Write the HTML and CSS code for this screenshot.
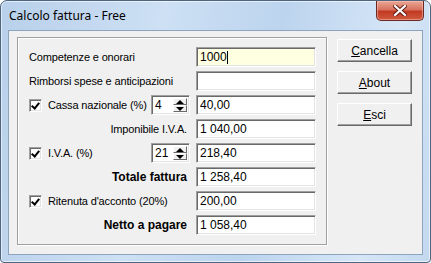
FILE: index.html
```html
<!DOCTYPE html>
<html lang="it">
<head>
  <meta charset="UTF-8">
  <title>Calcolo fattura - Free</title>
  <link rel="stylesheet" href="styles.css">
</head>
<body>
  <div class="window">
    <!-- Title bar -->
    <div class="titlebar">
      <span class="title">Calcolo fattura - Free</span>
      <div class="close">
        <svg width="14" height="11" viewBox="0 0 14 11" xmlns="http://www.w3.org/2000/svg">
          <path d="M2 1L12 10M12 1L2 10" stroke="#5a1a12" stroke-width="4" stroke-linecap="square"/>
          <path d="M2 1L12 10M12 1L2 10" stroke="white" stroke-width="2.2" stroke-linecap="square"/>
        </svg>
      </div>
    </div>

    <!-- Client area -->
    <div class="client">
      <div class="group">
        <div class="row">
          <span class="label">Competenze e onorari</span>
          <div class="field active">1000<span class="caret"></span></div>
        </div>
        <div class="row">
          <span class="label">Rimborsi spese e anticipazioni</span>
          <div class="field"></div>
        </div>
        <div class="row">
          <span class="check"></span>
          <span class="label">Cassa nazionale (%)</span>
          <div class="spinner">
            <span class="spin-value">4</span>
            <div class="spin-buttons">
              <span class="spin-btn"><span class="arrow-up"></span></span>
              <span class="spin-btn"><span class="arrow-down"></span></span>
            </div>
          </div>
          <div class="field">40,00</div>
        </div>
        <div class="row">
          <span class="label right">Imponibile I.V.A.</span>
          <div class="field">1 040,00</div>
        </div>
        <div class="row">
          <span class="check"></span>
          <span class="label">I.V.A. (%)</span>
          <div class="spinner">
            <span class="spin-value">21</span>
            <div class="spin-buttons">
              <span class="spin-btn"><span class="arrow-up"></span></span>
              <span class="spin-btn"><span class="arrow-down"></span></span>
            </div>
          </div>
          <div class="field">218,40</div>
        </div>
        <div class="row">
          <span class="label right bold">Totale fattura</span>
          <div class="field">1 258,40</div>
        </div>
        <div class="row">
          <span class="check"></span>
          <span class="label">Ritenuta d'acconto (20%)</span>
          <div class="field">200,00</div>
        </div>
        <div class="row">
          <span class="label right bold">Netto a pagare</span>
          <div class="field">1 058,40</div>
        </div>
      </div>

      <div class="buttons">
        <div class="button"><u>C</u>ancella</div>
        <div class="button"><u>A</u>bout</div>
        <div class="button"><u>E</u>sci</div>
      </div>
    </div>
  </div>
</body>
</html>
```

FILE: styles.css
```css
/* Reset and base styles */
* {
  margin: 0;
  padding: 0;
  box-sizing: border-box;
}

body {
  font-family: "Liberation Sans", Arial, sans-serif;
  font-size: 11px;
  color: #000;
  background-color: #fff;
}

/* Window frame */
.window {
  width: 431px;
  height: 263px;
  border: 1px solid #4e6580;
  border-radius: 7px 7px 4px 4px;
  padding: 0 7px 7px;
  background: linear-gradient(100deg, #b8d0ea 0%, #cde0f4 35%, #bcd4ee 60%, #d6e6f7 85%, #c3d8ef 100%);
  display: flex;
  flex-direction: column;
  box-shadow: inset 0 0 0 1px rgba(255, 255, 255, 0.6);
}

.titlebar {
  height: 29px;
  display: flex;
  align-items: flex-start;
  justify-content: space-between;
}

.title {
  font-family: "Noto Sans", "Open Sans", sans-serif;
  font-size: 12px;
  margin-top: 6px;
  margin-left: 1px;
}

.close {
  width: 48px;
  height: 20px;
  margin-right: -1px;
  border: 1px solid #6b2a22;
  border-top: none;
  border-radius: 0 0 5px 5px;
  background: linear-gradient(#e9a795 0%, #d8735f 45%, #c33a23 55%, #cf5a3e 100%);
  display: flex;
  align-items: center;
  justify-content: center;
  box-shadow: inset 0 0 0 1px rgba(255, 200, 190, 0.5);
}

/* Client area */
.client {
  flex: 1;
  background-color: #f0f0f0;
  border: 1px solid #8da4be;
  padding: 6px 0 0 8px;
  display: flex;
  align-items: flex-start;
  gap: 10px;
}

/* Group box */
.group {
  width: 310px;
  height: 208px;
  border: 1px solid #a0a0a0;
  box-shadow: inset 1px 1px #fff, 1px 1px #fff;
  padding: 9px 10px 0 11px;
  display: flex;
  flex-direction: column;
  gap: 4px;
}

.row {
  height: 20px;
  display: flex;
  align-items: center;
}

.label {
  flex: 1;
  white-space: nowrap;
  letter-spacing: -0.15px;
}

.label.right {
  text-align: right;
  padding-right: 9px;
}

.label.bold {
  font-weight: bold;
  font-size: 12px;
  letter-spacing: 0;
}

.field {
  width: 120px;
  height: 20px;
  background-color: #fff;
  border: 1px solid;
  border-color: #a0a0a0 #fff #fff #a0a0a0;
  box-shadow: inset 1px 1px #696969, inset -1px -1px #e3e3e3;
  padding: 0 3px;
  font-size: 12px;
  line-height: 18px;
  display: flex;
  align-items: center;
}

.field.active {
  background-color: #ffffe1;
}

.caret {
  width: 1px;
  height: 13px;
  background-color: #000;
}

/* Checkbox */
.check {
  width: 13px;
  height: 13px;
  margin-right: 6px;
  background-color: #fff;
  border: 1px solid;
  border-color: #a0a0a0 #fff #fff #a0a0a0;
  box-shadow: inset 1px 1px #696969, inset -1px -1px #e3e3e3;
  position: relative;
}

.check::after {
  content: "";
  position: absolute;
  left: 3px;
  top: 1px;
  width: 3px;
  height: 6px;
  border: solid #000;
  border-width: 0 2px 2px 0;
  transform: rotate(40deg);
}

/* Spinner */
.spinner {
  width: 39px;
  height: 20px;
  margin-right: 6px;
  background-color: #fff;
  border: 1px solid;
  border-color: #a0a0a0 #fff #fff #a0a0a0;
  box-shadow: inset 1px 1px #696969, inset -1px -1px #e3e3e3;
  display: flex;
  padding: 2px;
}

.spin-value {
  flex: 1;
  font-size: 12px;
  line-height: 14px;
  padding-left: 1px;
}

.spin-buttons {
  width: 14px;
  display: flex;
  flex-direction: column;
}

.spin-btn {
  flex: 1;
  background-color: #f0f0f0;
  border: 1px solid;
  border-color: #fff #696969 #696969 #fff;
  display: flex;
  align-items: center;
  justify-content: center;
}

.arrow-up {
  border-left: 4px solid transparent;
  border-right: 4px solid transparent;
  border-bottom: 4px solid #000;
}

.arrow-down {
  border-left: 4px solid transparent;
  border-right: 4px solid transparent;
  border-top: 4px solid #000;
}

/* Buttons */
.buttons {
  margin-top: 2px;
  display: flex;
  flex-direction: column;
  gap: 9px;
}

.button {
  width: 75px;
  height: 23px;
  background-color: #f0f0f0;
  border: 1px solid;
  border-color: #fff #696969 #696969 #fff;
  box-shadow: inset -1px -1px #a0a0a0;
  font-size: 12px;
  display: flex;
  align-items: center;
  justify-content: center;
}
```
